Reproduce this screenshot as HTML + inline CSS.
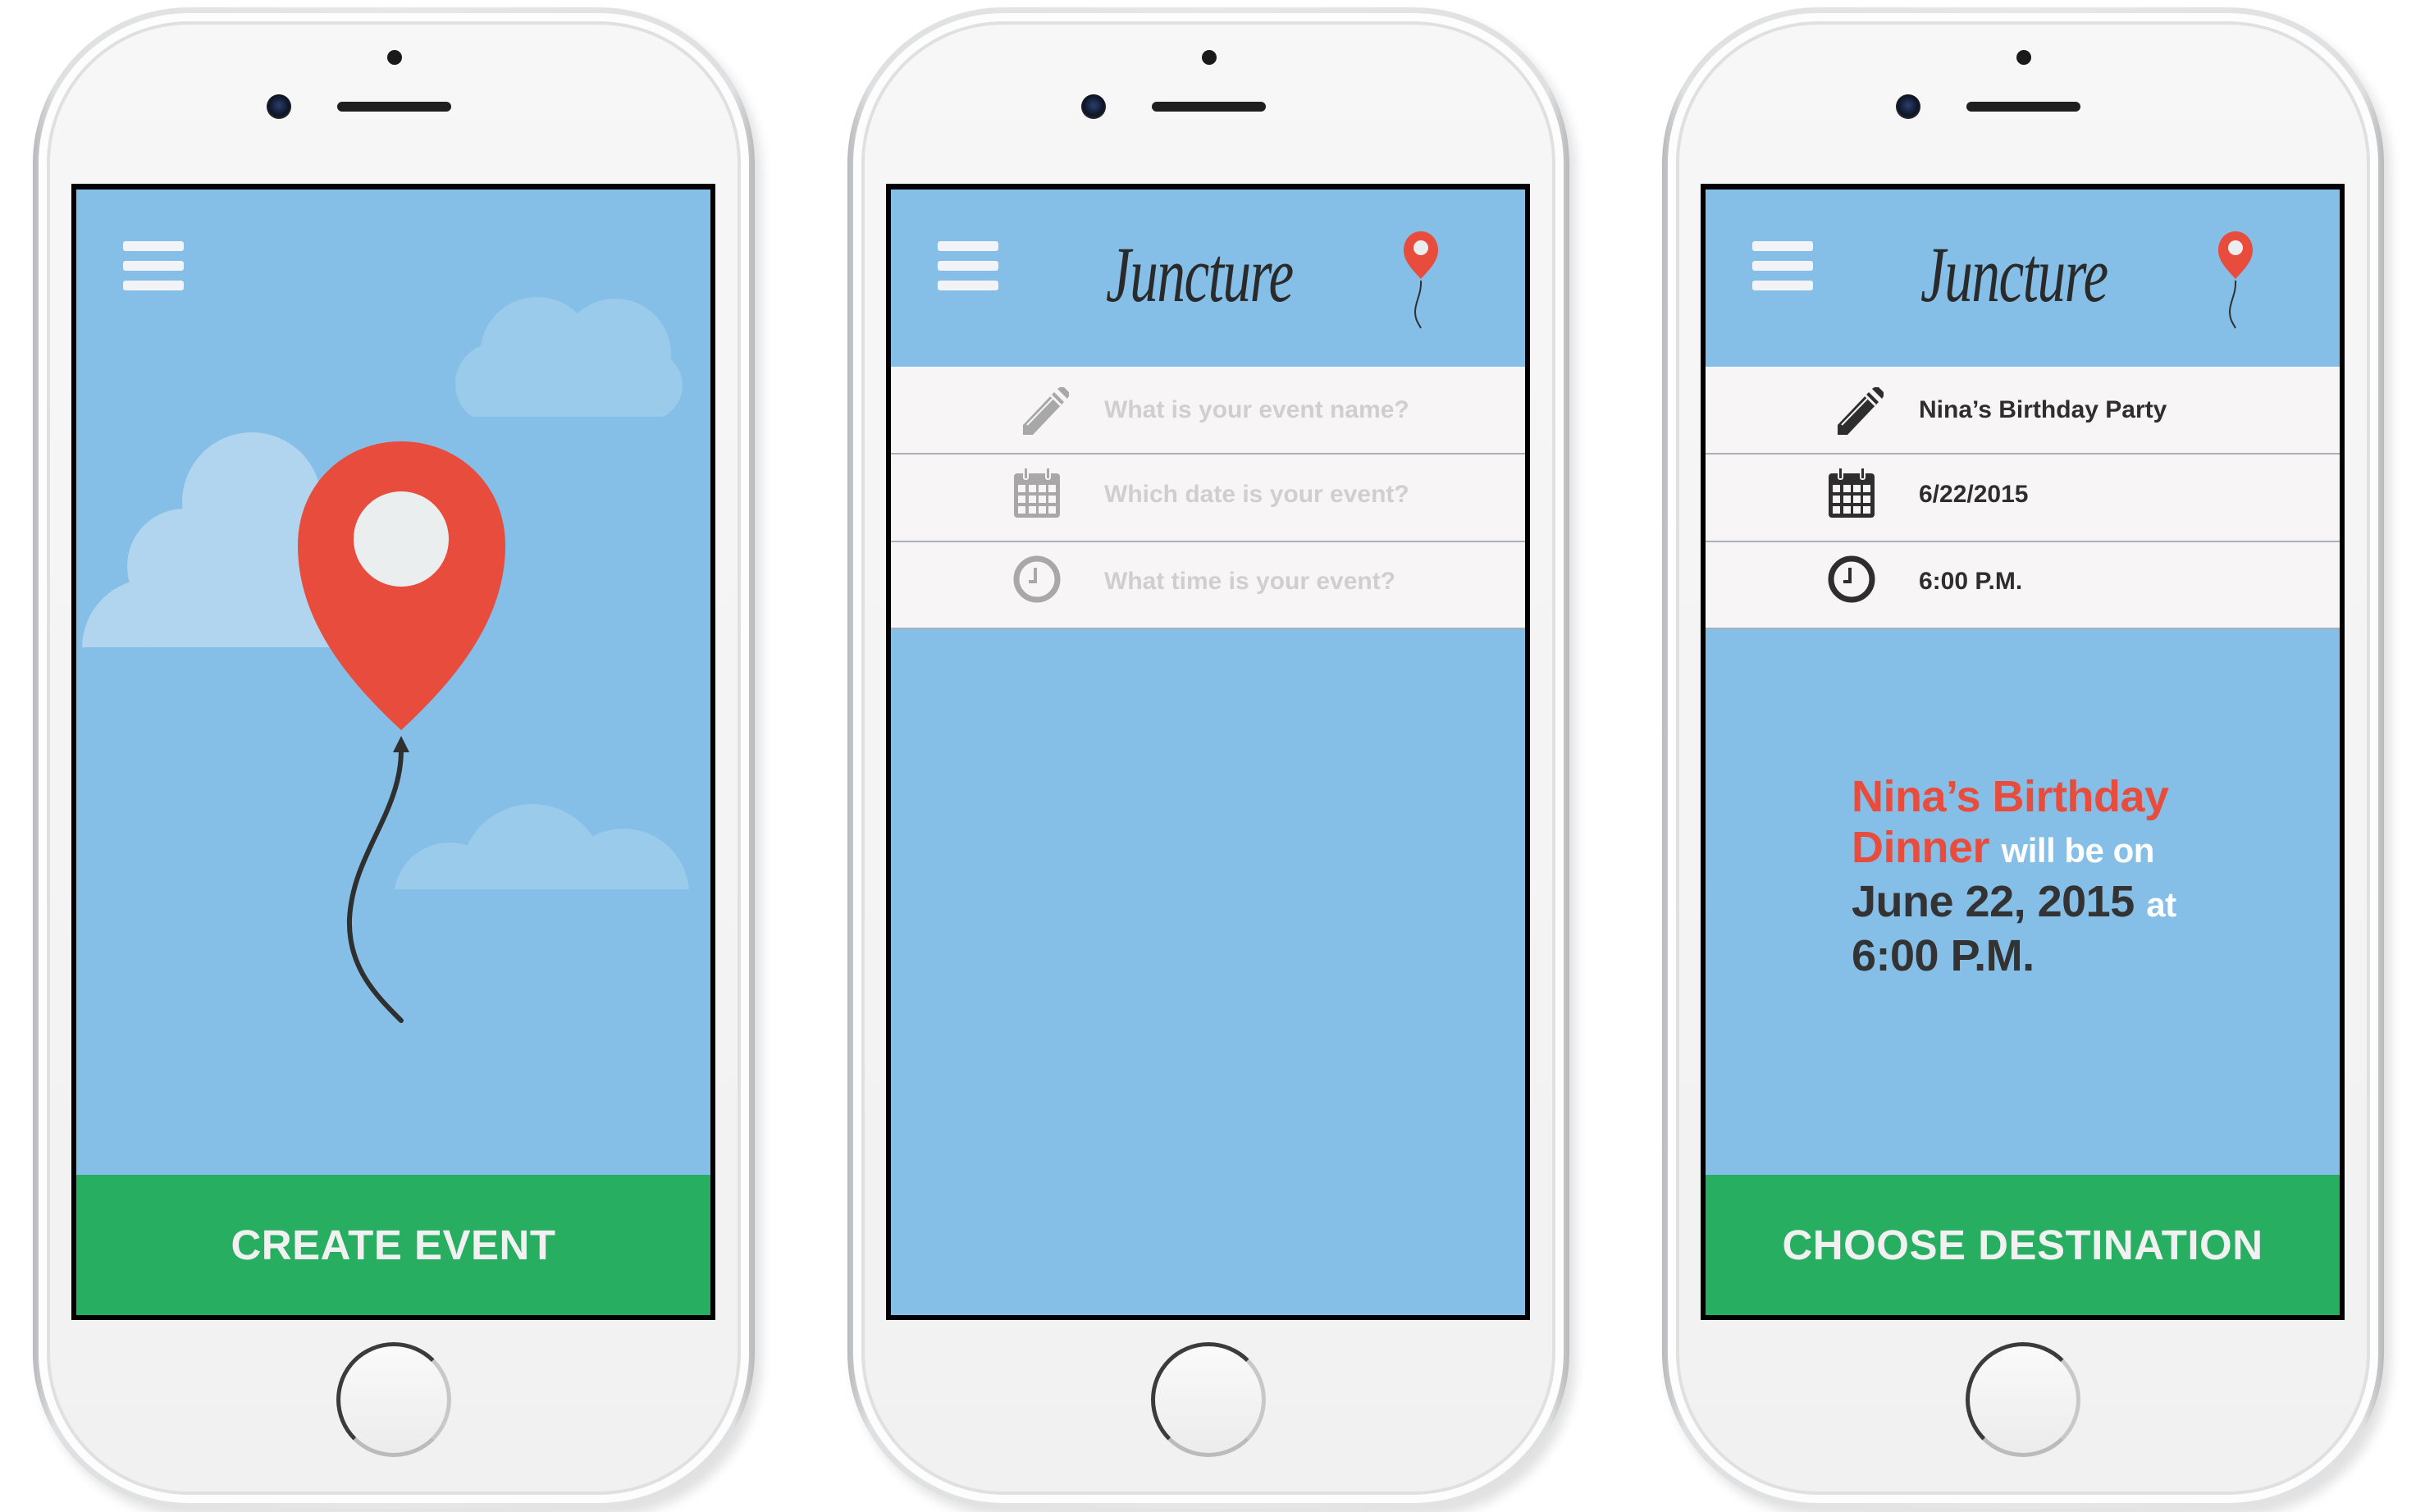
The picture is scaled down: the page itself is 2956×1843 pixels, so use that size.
<!DOCTYPE html>
<html><head><meta charset="utf-8"><style>
*{margin:0;padding:0;box-sizing:border-box}
body{width:2956px;height:1843px;background:#fff;position:relative;overflow:hidden;font-family:"Liberation Sans",sans-serif}
.ph{position:absolute;top:0;width:960px;height:1843px}
.a{position:absolute}
.body{left:40px;top:9px;width:880px;height:1830px;border-radius:190px;background:linear-gradient(90deg,#b9babc,#dfe0e1 3%,#e6e7e8 50%,#dfe0e1 97%,#b9babc);box-shadow:8px 10px 14px rgba(0,0,0,.12)}
.b2{left:47px;top:16px;width:866px;height:1816px;border-radius:183px;background:#fdfdfd}
.b3{left:57px;top:26px;width:846px;height:1796px;border-radius:173px;background:#e0e0e0}
.face{left:61px;top:30px;width:838px;height:1788px;border-radius:169px;background:linear-gradient(180deg,#f7f7f7,#f1f1f1)}
.scr{left:87px;top:224px;width:785px;height:1385px;background:#000}
.blue{left:93px;top:231px;width:773px;height:1372px;background:#85bfe7;overflow:hidden}
.ham{left:150px;width:74px;height:12px;border-radius:3px;background:#f1f3f6}
.green{left:93px;top:1432px;width:773px;height:171px;background:#27ae60;color:#f1f1f1;font-weight:bold;font-size:51px;text-align:center;line-height:171px;letter-spacing:.5px}
.home{left:410px;top:1636px;width:140px;height:140px;border-radius:50%;border:5px solid #3a3b3d;border-right-color:#c8c8c8;border-bottom-color:#bbb;background:linear-gradient(#fafafa,#ececec)}
.row{left:93px;width:773px;background:#f7f5f6;border-bottom:2px solid #a9b0b8}
.rt{position:absolute;left:260px;font-size:30px;font-weight:bold}
</style></head><body>

<div class="ph" style="left:0">
<div class="a body"></div><div class="a b2"></div><div class="a b3"></div><div class="a face"></div>
<div class="a" style="left:472px;top:61px;width:18px;height:18px;border-radius:50%;background:#1a1a1a"></div>
<div class="a" style="left:325px;top:115px;width:30px;height:30px;border-radius:50%;background:radial-gradient(circle at 50% 45%,#2a3f6e 0,#0d1424 55%,#333 80%,#777 100%)"></div>
<div class="a" style="left:411px;top:124px;width:139px;height:12px;border-radius:6px;background:#1e1e1e"></div>
<div class="a scr"></div>
<div class="a blue">
<svg width="773" height="1372" style="position:absolute;left:0;top:0" viewBox="93 231 773 1372">
<defs><clipPath id="c1"><rect x="0" y="0" width="1000" height="789"/></clipPath><clipPath id="c2"><rect x="0" y="0" width="1000" height="508"/></clipPath><clipPath id="c3"><rect x="0" y="0" width="1000" height="1084"/></clipPath></defs>
<g fill="#b1d5ee" clip-path="url(#c1)"><circle cx="185" cy="790" r="85"/><circle cx="240" cy="740" r="80"/><circle cx="225" cy="690" r="70"/><circle cx="307" cy="612" r="85"/><circle cx="380" cy="690" r="85"/><rect x="185" y="690" width="260" height="110"/></g>
<g fill="#9acbeb" clip-path="url(#c2)"><circle cx="605" cy="468" r="50"/><circle cx="655" cy="432" r="70"/><circle cx="750" cy="432" r="68"/><circle cx="790" cy="470" r="42"/><rect x="600" y="450" width="200" height="60"/></g>
<g fill="#9acbeb" clip-path="url(#c3)"><circle cx="548" cy="1095" r="68"/><circle cx="649" cy="1068" r="88"/><circle cx="760" cy="1090" r="80"/></g>
<path d="M489 890 C430 835 363 760 363 665 C363 590 420 538 489 538 C558 538 616 590 616 665 C616 760 548 835 489 890Z" fill="#e74c3c"/>
<ellipse cx="489" cy="657" rx="58" ry="58" fill="#ebeeef"/>
<path d="M489 912 C490 990 430 1040 426 1120 C424 1180 460 1215 489 1244" fill="none" stroke="#2f2f2f" stroke-width="6" stroke-linecap="round"/>
<path d="M479 917 L489 897 L499 917Z" fill="#2f2f2f"/>
</svg>
<div class="a ham" style="left:57px;top:63px"></div><div class="a ham" style="left:57px;top:87px"></div><div class="a ham" style="left:57px;top:111px"></div>
</div>
<div class="a green">CREATE EVENT</div>
<div class="a home"></div>
</div>

<div class="ph" style="left:993px">
<div class="a body"></div><div class="a b2"></div><div class="a b3"></div><div class="a face"></div>
<div class="a" style="left:472px;top:61px;width:18px;height:18px;border-radius:50%;background:#1a1a1a"></div>
<div class="a" style="left:325px;top:115px;width:30px;height:30px;border-radius:50%;background:radial-gradient(circle at 50% 45%,#2a3f6e 0,#0d1424 55%,#333 80%,#777 100%)"></div>
<div class="a" style="left:411px;top:124px;width:139px;height:12px;border-radius:6px;background:#1e1e1e"></div>
<div class="a scr"></div>
<div class="a blue"></div>
<div class="a ham" style="top:294px"></div><div class="a ham" style="top:318px"></div><div class="a ham" style="top:342px"></div>
<div class="a" style="left:355px;top:275px;font-family:'Liberation Serif',serif;font-style:italic;font-size:96px;color:#2a2a2a;line-height:120px;transform:scaleX(.72);transform-origin:left top;letter-spacing:-2px;width:360px">Juncture</div>
<svg class="a" style="left:710px;top:278px" width="60" height="130" viewBox="0 0 60 130"><path d="M29 62 C18 50 8 40 8 27 C8 14 17 4 29 4 C41 4 50 14 50 27 C50 40 40 50 29 62Z" fill="#e74c3c"/><circle cx="29" cy="24" r="9" fill="#ebeeef"/><path d="M29 64 C30 80 22 90 22 102 C22 112 26 116 29 122" fill="none" stroke="#2f2f2f" stroke-width="2"/></svg>
<div class="a row" style="top:447px;height:107px"><svg class="a" style="left:157px;top:25px" width="60" height="60" viewBox="0 0 60 60"><path d="M4 58 L4 46 L42 6 L54 18 L16 58Z M46 2 L52 -2 L62 8 L58 14Z" fill="#a8a8a8"/><path d="M38 10 L50 22" stroke="#f7f5f6" stroke-width="3"/><path d="M9 46 L40 14" stroke="#f7f5f6" stroke-width="2"/></svg><div class="rt" style="top:36px;color:#cfcfcf">What is your event name?</div></div>
<div class="a row" style="top:554px;height:107px"><svg class="a" style="left:149px;top:15px" width="58" height="64" viewBox="0 0 58 64"><rect x="1" y="8" width="56" height="54" rx="4" fill="#a8a8a8"/><g fill="#f7f5f6"><rect x="6" y="22" width="9" height="9"/><rect x="19" y="22" width="9" height="9"/><rect x="31" y="22" width="9" height="9"/><rect x="43" y="22" width="9" height="9"/><rect x="6" y="35" width="9" height="9"/><rect x="19" y="35" width="9" height="9"/><rect x="31" y="35" width="9" height="9"/><rect x="43" y="35" width="9" height="9"/><rect x="6" y="48" width="9" height="9"/><rect x="19" y="48" width="9" height="9"/><rect x="31" y="48" width="9" height="9"/><rect x="43" y="48" width="9" height="9"/><rect x="12" y="0" width="7" height="16" rx="3"/><rect x="39" y="0" width="7" height="16" rx="3"/></g><rect x="14" y="2" width="3" height="12" fill="#a8a8a8"/><rect x="41" y="2" width="3" height="12" fill="#a8a8a8"/></svg><div class="rt" style="top:32px;color:#cfcfcf">Which date is your event?</div></div>
<div class="a row" style="top:661px;height:106px"><svg class="a" style="left:148px;top:15px" width="60" height="60" viewBox="0 0 60 60"><circle cx="30" cy="30" r="25" fill="none" stroke="#a8a8a8" stroke-width="7"/><path d="M28 16 V33 H20" fill="none" stroke="#a8a8a8" stroke-width="4"/></svg><div class="rt" style="top:31px;color:#cfcfcf">What time is your event?</div></div>
<div class="a home"></div>
</div>

<div class="ph" style="left:1986px">
<div class="a body"></div><div class="a b2"></div><div class="a b3"></div><div class="a face"></div>
<div class="a" style="left:472px;top:61px;width:18px;height:18px;border-radius:50%;background:#1a1a1a"></div>
<div class="a" style="left:325px;top:115px;width:30px;height:30px;border-radius:50%;background:radial-gradient(circle at 50% 45%,#2a3f6e 0,#0d1424 55%,#333 80%,#777 100%)"></div>
<div class="a" style="left:411px;top:124px;width:139px;height:12px;border-radius:6px;background:#1e1e1e"></div>
<div class="a scr"></div>
<div class="a blue"></div>
<div class="a ham" style="top:294px"></div><div class="a ham" style="top:318px"></div><div class="a ham" style="top:342px"></div>
<div class="a" style="left:355px;top:275px;font-family:'Liberation Serif',serif;font-style:italic;font-size:96px;color:#2a2a2a;line-height:120px;transform:scaleX(.72);transform-origin:left top;letter-spacing:-2px;width:360px">Juncture</div>
<svg class="a" style="left:710px;top:278px" width="60" height="130" viewBox="0 0 60 130"><path d="M29 62 C18 50 8 40 8 27 C8 14 17 4 29 4 C41 4 50 14 50 27 C50 40 40 50 29 62Z" fill="#e74c3c"/><circle cx="29" cy="24" r="9" fill="#ebeeef"/><path d="M29 64 C30 80 22 90 22 102 C22 112 26 116 29 122" fill="none" stroke="#2f2f2f" stroke-width="2"/></svg>
<div class="a row" style="top:447px;height:107px"><svg class="a" style="left:157px;top:25px" width="60" height="60" viewBox="0 0 60 60"><path d="M4 58 L4 46 L42 6 L54 18 L16 58Z M46 2 L52 -2 L62 8 L58 14Z" fill="#2e2e2e"/><path d="M38 10 L50 22" stroke="#f7f5f6" stroke-width="3"/><path d="M9 46 L40 14" stroke="#f7f5f6" stroke-width="2"/></svg><div class="rt" style="top:36px;color:#2e2e2e">Nina’s Birthday Party</div></div>
<div class="a row" style="top:554px;height:107px"><svg class="a" style="left:149px;top:15px" width="58" height="64" viewBox="0 0 58 64"><rect x="1" y="8" width="56" height="54" rx="4" fill="#2e2e2e"/><g fill="#f7f5f6"><rect x="6" y="22" width="9" height="9"/><rect x="19" y="22" width="9" height="9"/><rect x="31" y="22" width="9" height="9"/><rect x="43" y="22" width="9" height="9"/><rect x="6" y="35" width="9" height="9"/><rect x="19" y="35" width="9" height="9"/><rect x="31" y="35" width="9" height="9"/><rect x="43" y="35" width="9" height="9"/><rect x="6" y="48" width="9" height="9"/><rect x="19" y="48" width="9" height="9"/><rect x="31" y="48" width="9" height="9"/><rect x="43" y="48" width="9" height="9"/><rect x="12" y="0" width="7" height="16" rx="3"/><rect x="39" y="0" width="7" height="16" rx="3"/></g><rect x="14" y="2" width="3" height="12" fill="#2e2e2e"/><rect x="41" y="2" width="3" height="12" fill="#2e2e2e"/></svg><div class="rt" style="top:32px;color:#2e2e2e">6/22/2015</div></div>
<div class="a row" style="top:661px;height:106px"><svg class="a" style="left:148px;top:15px" width="60" height="60" viewBox="0 0 60 60"><circle cx="30" cy="30" r="25" fill="none" stroke="#2e2e2e" stroke-width="7"/><path d="M28 16 V33 H20" fill="none" stroke="#2e2e2e" stroke-width="4"/></svg><div class="rt" style="top:31px;color:#2e2e2e">6:00 P.M.</div></div>
<div class="a" style="left:271px;top:940px;width:440px;font-weight:bold;font-size:54px;line-height:62px;color:#333;letter-spacing:-.5px">
<span style="color:#e74c3c">Nina’s Birthday Dinner</span> <span style="color:#fff;font-size:42px">will be on</span> June 22, 2015 <span style="color:#fff;font-size:42px">at</span> 6:00 P.M.</div>
<div class="a green">CHOOSE DESTINATION</div>
<div class="a home"></div>
</div>
</body></html>
